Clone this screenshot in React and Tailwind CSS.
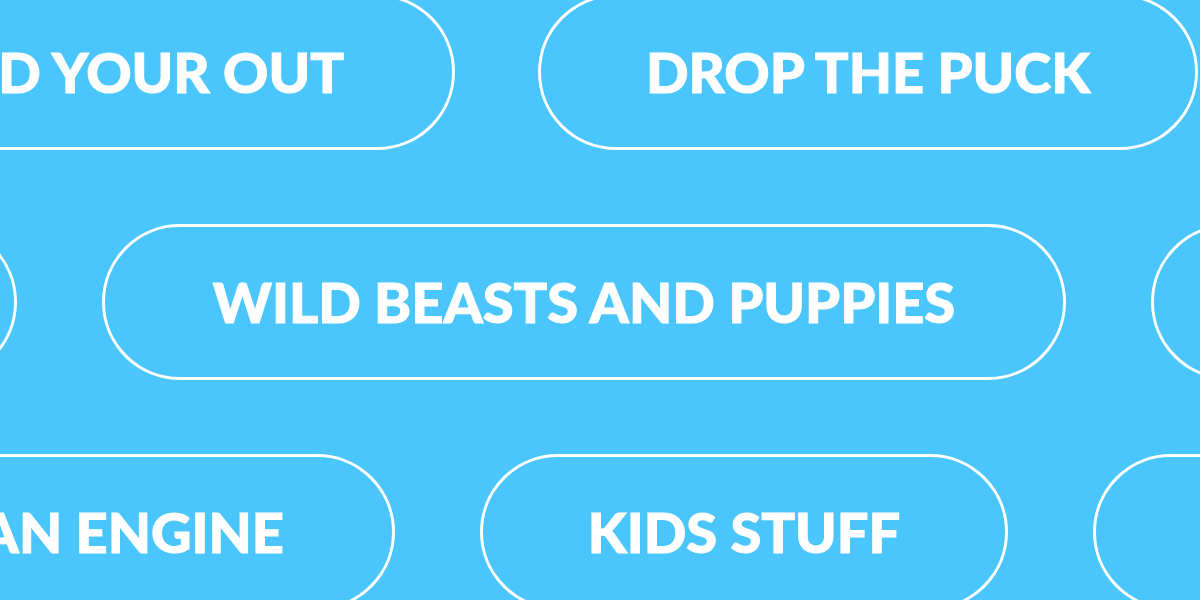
import React from 'react'

// Rows of outlined tag pills, scrolled so that the ends run off the page.
const rows = [
    {
        offset: 'ml-[-105px] mt-[-6px]',
        gap: 'gap-[83px]',
        tags: [
            { label: 'FIND YOUR OUT', width: 'w-[560px]', align: 'end' },
            { label: 'DROP THE PUCK', width: 'w-[660px]' },
        ],
    },
    {
        offset: 'ml-[-283px]',
        gap: 'gap-[85px]',
        tags: [
            { width: 'w-[300px]' },
            { label: 'WILD BEASTS AND PUPPIES', width: 'w-[964px]' },
            { width: 'w-[400px]' },
        ],
    },
    {
        offset: 'ml-[-165px]',
        gap: 'gap-[85px]',
        tags: [
            { label: 'BUILD AN ENGINE', width: 'w-[560px]', align: 'end' },
            { label: 'KIDS STUFF', width: 'w-[528px]' },
            { width: 'w-[500px]' },
        ],
    },
]

function Tag({ label, width, align }) {
    const place = align === 'end' ? 'justify-end pr-[108px]' : 'justify-center'
    return (
        <div
            className={`${width} ${place} h-[156px] shrink-0 flex items-center rounded-full border-[3px] border-white`}
        >
            {label && (
                <span className="text-[56px] leading-none font-black text-white whitespace-nowrap [-webkit-text-stroke:1px_white]">
                    {label}
                </span>
            )}
        </div>
    )
}

export default function App() {
    return (
        <section className="w-full h-[600px] overflow-hidden bg-[#4ac6fc] font-['Lato','Open_Sans',sans-serif] flex flex-col gap-[74px]">
            {rows.map((row, i) => (
                <div key={i} className={`flex shrink-0 ${row.gap} ${row.offset}`}>
                    {row.tags.map((tag, j) => (
                        <Tag key={j} {...tag} />
                    ))}
                </div>
            ))}
        </section>
    )
}
